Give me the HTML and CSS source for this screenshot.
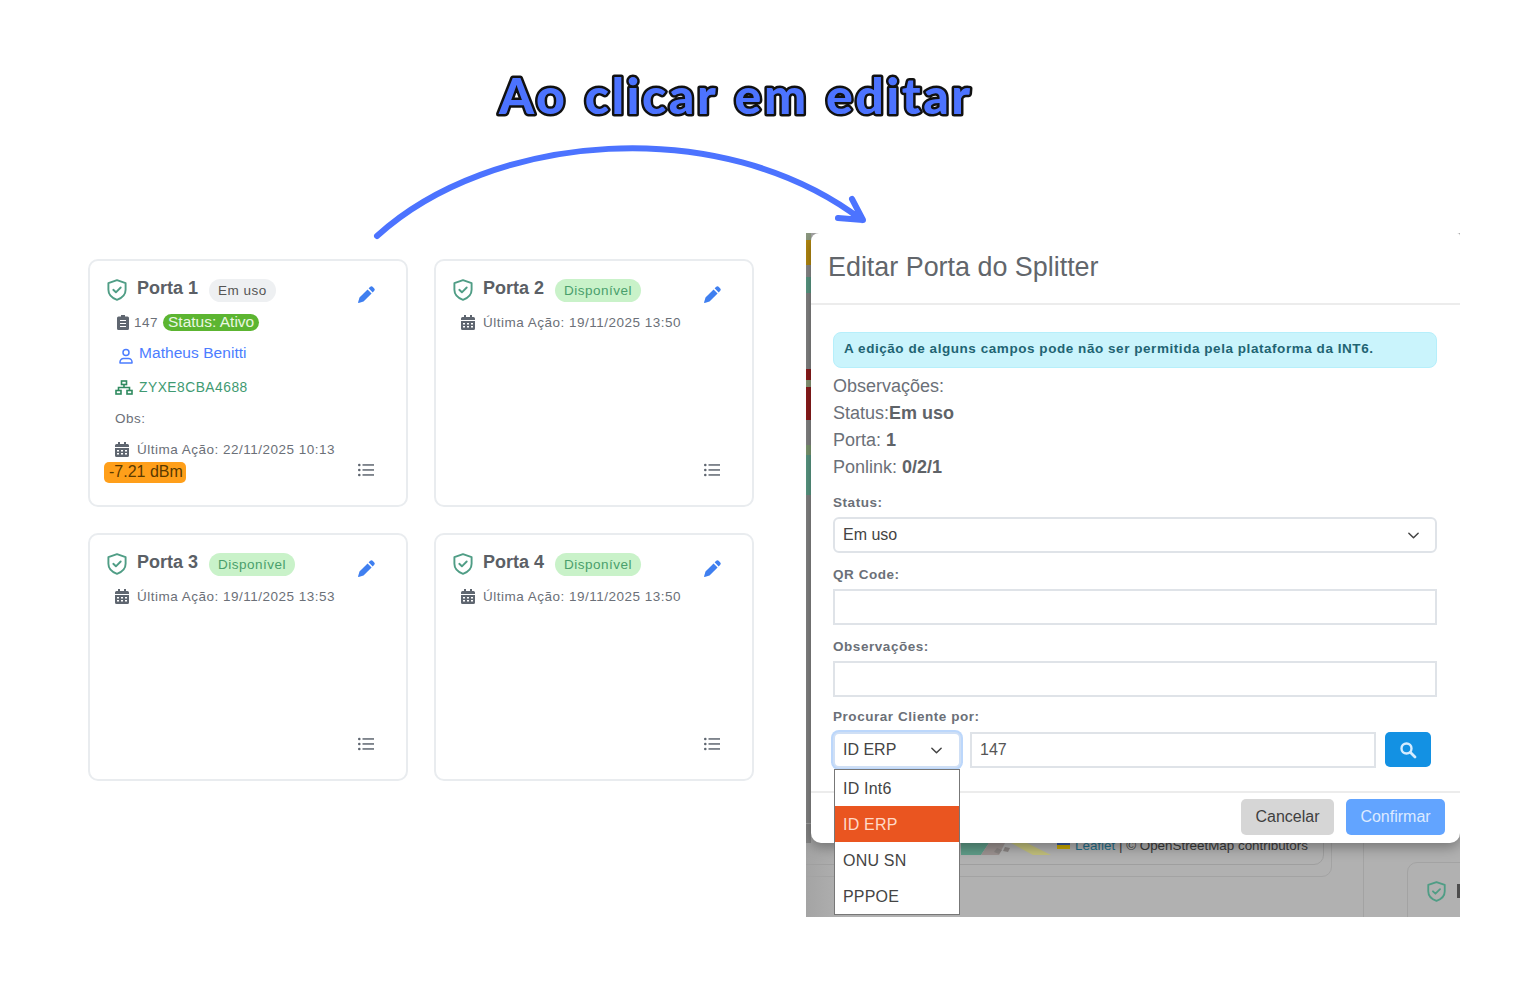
FILE: index.html
```html
<!DOCTYPE html>
<html lang="en">
<head>
  <meta charset="UTF-8">
  <title>Ao clicar em editar</title>
  <link rel="stylesheet" href="styles.css">
</head>
<body>
  <svg class="defs" width="0" height="0">
    <symbol id="shield" viewBox="0 0 24 24">
      <path d="M12 2.2 20.6 5.2v6.6c0 5-3.6 8.300-8.600 10-5-1.700-8.600-5-8.600-10V5.200z" fill="none" stroke="#4f9d85" stroke-width="1.900" stroke-linejoin="round"/>
      <path d="M8.300 11.800l2.600 2.500 4.800-4.800" fill="none" stroke="#4f9d85" stroke-width="1.900" stroke-linecap="round" stroke-linejoin="round"/>
    </symbol>
    <symbol id="pencil" viewBox="0 0 16 16">
      <path d="M11.300.9a1.900 1.900 0 0 1 2.700 0l1.100 1.100a1.900 1.900 0 0 1 0 2.700l-1.300 1.300L10 2.200zM9 3.200 12.800 7 5.200 14.600.6 15.900a.4.400 0 0 1-.5-.5l1.300-4.600z" fill="#3f7ff0"/>
    </symbol>
    <symbol id="list" viewBox="0 0 16 14">
      <g fill="#5f6670">
        <circle cx="1.300" cy="2" r="1.300"/><circle cx="1.300" cy="7" r="1.300"/><circle cx="1.300" cy="12" r="1.300"/>
        <rect x="4.500" y="1.200" width="11.500" height="1.500"/><rect x="4.500" y="6.200" width="11.500" height="1.500"/><rect x="4.500" y="11.200" width="11.500" height="1.500"/>
      </g>
    </symbol>
    <symbol id="calendar" viewBox="0 0 14 15">
      <path d="M3 0h2v2h4V0h2v2h1.500A1.500 1.500 0 0 1 14 3.500V5H0V3.500A1.500 1.500 0 0 1 1.500 2H3zM0 6h14v7.500a1.500 1.500 0 0 1-1.500 1.500h-11A1.500 1.500 0 0 1 0 13.500zm2 2v1.500h2V8zm4 0v1.500h2V8zm4 0v1.500h2V8zm-8 3v1.500h2V11zm4 0v1.500h2V11zm4 0v1.500h2V11z" fill="#5f6670" fill-rule="evenodd"/>
    </symbol>
    <symbol id="chevron" viewBox="0 0 14 14">
      <path d="M2 4.500l5 5 5-5" fill="none" stroke="#444" stroke-width="1.600" stroke-linecap="round" stroke-linejoin="round"/>
    </symbol>
  </svg>

  <div class="canvas">
    <svg class="banner" width="1524" height="233" viewBox="0 0 1524 233">
      <text class="headline" x="499" y="114">Ao clicar em editar</text>
      <path class="arrow" d="M377 236C490 133 720 112 862 220M838 218 863 220 852 199"/>
    </svg>

    <div class="columns">
      <div class="cards">
        <div class="card">
          <div class="card-head">
            <svg class="icon-shield"><use href="#shield"/></svg>
            <span class="card-title">Porta 1</span>
            <span class="badge badge-used">Em uso</span>
          </div>
          <svg class="icon-edit"><use href="#pencil"/></svg>
          <div class="row row-client">
            <svg class="icon-clip" viewBox="0 0 12 15"><path d="M4 0h4v1.500h2.500A1.500 1.500 0 0 1 12 3v10.500a1.500 1.500 0 0 1-1.500 1.500h-9A1.500 1.500 0 0 1 0 13.500V3a1.500 1.500 0 0 1 1.500-1.500H4zM3 5v1h6V5zm0 3v1h6V8zm0 3v1h6v-1z" fill="#5f6670" fill-rule="evenodd"/></svg>
            <span>147</span>
            <span class="badge-active">Status: Ativo</span>
          </div>
          <div class="row row-user">
            <svg class="icon-user" viewBox="0 0 14 16"><circle cx="7" cy="4.500" r="3" fill="none" stroke="#4c7dff" stroke-width="1.500"/><path d="M1 15v-1a3.500 3.500 0 0 1 3.500-3.500h5A3.500 3.500 0 0 1 13 14v1z" fill="none" stroke="#4c7dff" stroke-width="1.500" stroke-linejoin="round"/></svg>
            <a class="user-link" href="#">Matheus Benitti</a>
          </div>
          <div class="row row-serial">
            <svg class="icon-net" viewBox="0 0 18 15"><g fill="none" stroke="#2f8a5f" stroke-width="1.600"><rect x="6.500" y="1" width="5" height="3.500"/><rect x="1" y="10.500" width="5" height="3.500"/><rect x="12" y="10.500" width="5" height="3.500"/><path d="M9 4.500v3M3.500 10.500v-3h11v3"/></g></svg>
            <span>ZYXE8CBA4688</span>
          </div>
          <div class="row row-obs">Obs:</div>
          <div class="row row-action">
            <svg class="icon-cal"><use href="#calendar"/></svg>
            <span>Última Ação: 22/11/2025 10:13</span>
          </div>
          <span class="badge-signal">-7.21 dBm</span>
          <svg class="icon-list"><use href="#list"/></svg>
        </div>

        <div class="card">
          <div class="card-head">
            <svg class="icon-shield"><use href="#shield"/></svg>
            <span class="card-title">Porta 2</span>
            <span class="badge badge-free">Disponível</span>
          </div>
          <svg class="icon-edit"><use href="#pencil"/></svg>
          <div class="row row-action row-first">
            <svg class="icon-cal"><use href="#calendar"/></svg>
            <span>Última Ação: 19/11/2025 13:50</span>
          </div>
          <svg class="icon-list"><use href="#list"/></svg>
        </div>

        <div class="card">
          <div class="card-head">
            <svg class="icon-shield"><use href="#shield"/></svg>
            <span class="card-title">Porta 3</span>
            <span class="badge badge-free">Disponível</span>
          </div>
          <svg class="icon-edit"><use href="#pencil"/></svg>
          <div class="row row-action row-first">
            <svg class="icon-cal"><use href="#calendar"/></svg>
            <span>Última Ação: 19/11/2025 13:53</span>
          </div>
          <svg class="icon-list"><use href="#list"/></svg>
        </div>

        <div class="card">
          <div class="card-head">
            <svg class="icon-shield"><use href="#shield"/></svg>
            <span class="card-title">Porta 4</span>
            <span class="badge badge-free">Disponível</span>
          </div>
          <svg class="icon-edit"><use href="#pencil"/></svg>
          <div class="row row-action row-first">
            <svg class="icon-cal"><use href="#calendar"/></svg>
            <span>Última Ação: 19/11/2025 13:50</span>
          </div>
          <svg class="icon-list"><use href="#list"/></svg>
        </div>
      </div>

      <div class="shot">
        <!-- what is left of the dimmed page behind the modal -->
        <div class="behind-stripe"></div>
        <svg class="behind-map" width="96" height="14" viewBox="0 0 96 14">
          <path d="M0 0h28l-8 12H0z" fill="#5f9c88"/>
          <path d="M28 0h16l-6 12H20z" fill="#9c9391"/>
          <path d="M50 0h16l24 12H72z" fill="#c2c07c"/>
          <path d="M36 5l5 2-3 4-5-2zM44 4l5 1-2 4-5-1z" fill="#8a8583"/>
        </svg>
        <div class="behind-attrib">
          <span class="flag"></span><span class="leaflet">Leaflet</span> | © OpenStreetMap contributors
        </div>
        <div class="behind-box"></div>
        <div class="behind-box-outer"></div>
        <div class="behind-line"></div>
        <div class="behind-card">
          <svg class="behind-shield"><use href="#shield"/></svg>
          <span class="behind-letter"></span>
        </div>

        <div class="modal">
          <div class="modal-head">Editar Porta do Splitter</div>
          <div class="modal-body">
            <div class="alert">A edição de alguns campos pode não ser permitida pela plataforma da INT6.</div>
            <div class="info">Observações:</div>
            <div class="info">Status:<b>Em uso</b></div>
            <div class="info">Porta: <b>1</b></div>
            <div class="info">Ponlink: <b>0/2/1</b></div>

            <label class="field-label label-status">Status:</label>
            <div class="select">Em uso <svg class="chevron"><use href="#chevron"/></svg></div>
            <label class="field-label">QR Code:</label>
            <input class="text-input" type="text">
            <label class="field-label">Observações:</label>
            <input class="text-input" type="text">

            <label class="field-label label-search">Procurar Cliente por:</label>
            <div class="search-row">
              <div class="select select-focus">ID ERP <svg class="chevron"><use href="#chevron"/></svg></div>
              <input class="text-input search-input" type="text" value="147">
              <button class="btn-search" type="button">
                <svg width="18" height="18" viewBox="0 0 18 18"><circle cx="7.500" cy="7.500" r="5" fill="none" stroke="#d6ecff" stroke-width="2.400"/><path d="M11.500 11.500 16 16" stroke="#d6ecff" stroke-width="2.800" stroke-linecap="round"/></svg>
              </button>
            </div>
          </div>
          <div class="modal-foot">
            <button class="btn btn-cancel" type="button">Cancelar</button>
            <button class="btn btn-confirm" type="button">Confirmar</button>
          </div>
        </div>

        <ul class="dropdown">
          <li>ID Int6</li>
          <li class="selected">ID ERP</li>
          <li>ONU SN</li>
          <li>PPPOE</li>
        </ul>
      </div>
    </div>
  </div>
</body>
</html>
```

FILE: styles.css
```css
* {
  box-sizing: border-box;
}

body {
  margin: 0;
  background-color: #fff;
  font-family: "Liberation Sans", Arial, sans-serif;
}

.defs {
  position: absolute;
}

.canvas {
  height: 981px;
  overflow: hidden;
}

/* Title and arrow */
.banner {
  display: block;
  overflow: visible;
}

.headline {
  font-family: "Lato", sans-serif;
  font-size: 50px;
  font-weight: 900;
  letter-spacing: 2.500px;
  word-spacing: 3px;
  fill: #4c73ff;
  stroke: #111;
  stroke-width: 5px;
  stroke-linejoin: round;
  paint-order: stroke fill;
}

.arrow {
  fill: none;
  stroke: #4c73ff;
  stroke-width: 6px;
  stroke-linecap: round;
  stroke-linejoin: round;
}

.columns {
  display: flex;
  gap: 52px;
  padding-left: 88px;
}

/* Port cards */
.cards {
  display: grid;
  grid-template-columns: 320px 320px;
  grid-auto-rows: 248px;
  gap: 26px;
  padding-top: 26px;
}

.card {
  position: relative;
  padding: 18px 18px;
  background-color: #fff;
  border: 2px solid #e9ecef;
  border-radius: 10px;
  color: #6b7078;
  font-size: 13.500px;
  letter-spacing: 0.500px;
}

.card-head {
  display: flex;
  align-items: center;
  height: 24px;
}

.icon-shield {
  width: 24px;
  height: 24px;
  margin-left: -3px;
  margin-top: -3px;
}

.card-title {
  margin-left: 8px;
  font-size: 18px;
  font-weight: bold;
  letter-spacing: 0;
  color: #5b5f66;
  position: relative;
  top: -3px;
}

.badge {
  margin-left: 11px;
  height: 23px;
  padding: 0 9px;
  border-radius: 12px;
  font-size: 13.500px;
  line-height: 23px;
  position: relative;
  top: -1px;
}

.badge-used {
  background-color: #eef0f2;
  color: #555;
}

.badge-free {
  background-color: #c9f2c9;
  color: #4a9f6c;
}

.icon-edit {
  position: absolute;
  left: 268px;
  top: 25px;
  width: 17px;
  height: 17px;
}

.icon-list {
  position: absolute;
  left: 268px;
  bottom: 28px;
  width: 16px;
  height: 14px;
}

.row {
  display: flex;
  align-items: center;
  height: 20px;
  padding-left: 7px;
  white-space: nowrap;
}

.row-client {
  margin-top: 9px;
  gap: 5px;
  padding-left: 9px;
}

.icon-clip {
  width: 12px;
  height: 15px;
}

.badge-active {
  height: 17px;
  padding: 0 5px;
  border-radius: 9px;
  background-color: #5cb531;
  color: #eaf7e2;
  font-size: 15.500px;
  letter-spacing: 0;
  line-height: 16px;
}

.row-user {
  margin-top: 11px;
  padding-left: 11px;
}

.icon-user {
  width: 14px;
  height: 16px;
  margin-top: 6px;
}

.user-link {
  margin-left: 6px;
  color: #4c7dff;
  font-size: 15.500px;
  letter-spacing: 0.050px;
  text-decoration: none;
}

.row-serial {
  margin-top: 14px;
  color: #3f9a72;
  font-size: 13.800px;
}

.icon-net {
  width: 18px;
  height: 15px;
  margin-right: 6px;
}

.row-obs {
  margin-top: 11px;
}

.row-action {
  margin-top: 11px;
  gap: 8px;
}

.row-first {
  margin-top: 9px;
}

.icon-cal {
  width: 14px;
  height: 15px;
}

.badge-signal {
  display: block;
  width: 82px;
  height: 21px;
  margin: 3px 0 0 -4px;
  padding-left: 5px;
  border-radius: 5px;
  background-color: #ff9f1a;
  color: #5a3a00;
  font-size: 16px;
  letter-spacing: 0;
  line-height: 19px;
}

/* Screenshot of the modal */
.shot {
  position: relative;
  width: 654px;
  height: 684px;
  overflow: hidden;
  background: linear-gradient(90deg, #a4a4a4 0, #b1b1b1 40px);
}

.behind-stripe {
  width: 5px;
  height: 610px;
  background: linear-gradient(180deg,
    #8d9a80 0 7px, #b58a10 7px 32px, #8a8a8a 32px 44px, #5a9a85 44px 60px,
    #848484 60px 136px, #8f1c1c 136px 147px, #8b9a78 147px 154px, #8f1c1c 154px 187px,
    #858585 187px 212px, #7e9a72 212px 222px, #5a9a85 222px 262px, #858585 262px);
}

.behind-map {
  position: absolute;
  left: 155px;
  top: 610px;
}

.behind-attrib {
  position: absolute;
  left: 251px;
  top: 604px;
  font-size: 13.400px;
  line-height: 18px;
  color: #3a3a3a;
  white-space: nowrap;
}

.flag {
  display: inline-block;
  width: 13px;
  height: 7px;
  margin-right: 5px;
  background: linear-gradient(180deg, #3b5aa0 50%, #c9a800 50%);
  vertical-align: 1px;
}

.leaflet {
  color: #1f6f8b;
}

.behind-box {
  position: absolute;
  left: -10px;
  top: 590px;
  width: 528px;
  height: 42px;
  border: 1px solid #9f9f9f;
  border-radius: 10px;
}

.behind-box-outer {
  position: absolute;
  left: -10px;
  top: 590px;
  width: 536px;
  height: 54px;
  border: 1px solid #a3a3a3;
  border-radius: 10px;
}

.behind-line {
  position: absolute;
  left: 557px;
  top: 600px;
  width: 1px;
  height: 84px;
  background-color: #a3a3a3;
}

.behind-card {
  position: absolute;
  left: 601px;
  top: 629px;
  width: 80px;
  height: 80px;
  border: 1px solid #a3a3a3;
  border-radius: 10px;
}

.behind-shield {
  position: absolute;
  left: 17px;
  top: 17px;
  width: 23px;
  height: 23px;
}

.behind-letter {
  position: absolute;
  left: 49px;
  top: 21px;
  width: 5px;
  height: 14px;
  background-color: #4d4d4d;
}

.modal {
  position: absolute;
  left: 5px;
  top: 0;
  width: 649px;
  height: 610px;
  background-color: #fff;
  border-radius: 8px 3px 10px 10px;
  box-shadow: 0 4px 14px rgba(0, 0, 0, 0.35);
  color: #6b7078;
}

.modal-head {
  height: 72px;
  padding: 17px 0 0 17px;
  border-bottom: 2px solid #ececec;
  font-size: 26.900px;
  line-height: 34px;
  color: #62666b;
}

.modal-body {
  height: 486px;
  padding: 27px 22px 0;
}

.alert {
  height: 36px;
  width: 604px;
  padding-left: 10px;
  background-color: #caf4fc;
  border: 1px solid #b6effb;
  border-radius: 8px;
  font-size: 13.500px;
  font-weight: bold;
  letter-spacing: 0.550px;
  line-height: 32px;
  color: #1f6473;
  margin-bottom: 5px;
}

.info {
  height: 27px;
  font-size: 18px;
  line-height: 27px;
}

.info b {
  color: #5f6368;
}

.field-label {
  display: block;
  height: 22px;
  font-size: 13.500px;
  font-weight: bold;
  line-height: 16px;
  letter-spacing: 0.550px;
  margin-top: 14px;
}

.label-status {
  margin-top: 14px;
}

.label-search {
  margin-top: 12px;
  height: 23px;
}

.select {
  display: flex;
  align-items: center;
  justify-content: space-between;
  height: 36px;
  width: 604px;
  padding: 0 15px 0 8px;
  background-color: #fff;
  border: 2px solid #dfe3e8;
  border-radius: 6px;
  font-size: 16px;
  color: #444;
}

.chevron {
  width: 13px;
  height: 13px;
}

.text-input {
  display: block;
  height: 36px;
  width: 604px;
  padding: 0 8px;
  border: 2px solid #dfe3e8;
  border-radius: 0;
  outline: none;
  font-family: inherit;
  font-size: 16px;
  color: #555;
}

.search-row {
  display: flex;
  align-items: flex-start;
}

.select-focus {
  width: 128px;
  padding-right: 16px;
  border-color: #cfdff5;
  box-shadow: 0 0 0 2px #bcd7fb;
}

.search-input {
  width: 406px;
  margin-left: 9px;
}

.btn-search {
  display: flex;
  align-items: center;
  justify-content: center;
  width: 46px;
  height: 35px;
  margin-left: 9px;
  padding: 0;
  border: none;
  border-radius: 5px;
  background-color: #1391e3;
}

.modal-foot {
  display: flex;
  justify-content: flex-end;
  gap: 12px;
  height: 51px;
  padding: 6px 15px 0 0;
  border-top: 2px solid #ececec;
}

.btn {
  height: 36px;
  border: none;
  border-radius: 5px;
  font-family: inherit;
  font-size: 16px;
}

.btn-cancel {
  width: 93px;
  background-color: #d6d6d6;
  color: #3f3f3f;
}

.btn-confirm {
  width: 99px;
  background-color: #62a4ff;
  color: #dceaff;
}

.dropdown {
  position: absolute;
  left: 28px;
  top: 536px;
  width: 126px;
  margin: 0;
  padding: 0;
  list-style-type: none;
  background-color: #fff;
  border: 1px solid #777;
  font-size: 16px;
  letter-spacing: 0.200px;
  color: #444;
}

.dropdown li {
  height: 36px;
  padding-left: 8px;
  line-height: 37px;
}

.dropdown .selected {
  background-color: #ea5520;
  color: #ffd9c8;
}
```
